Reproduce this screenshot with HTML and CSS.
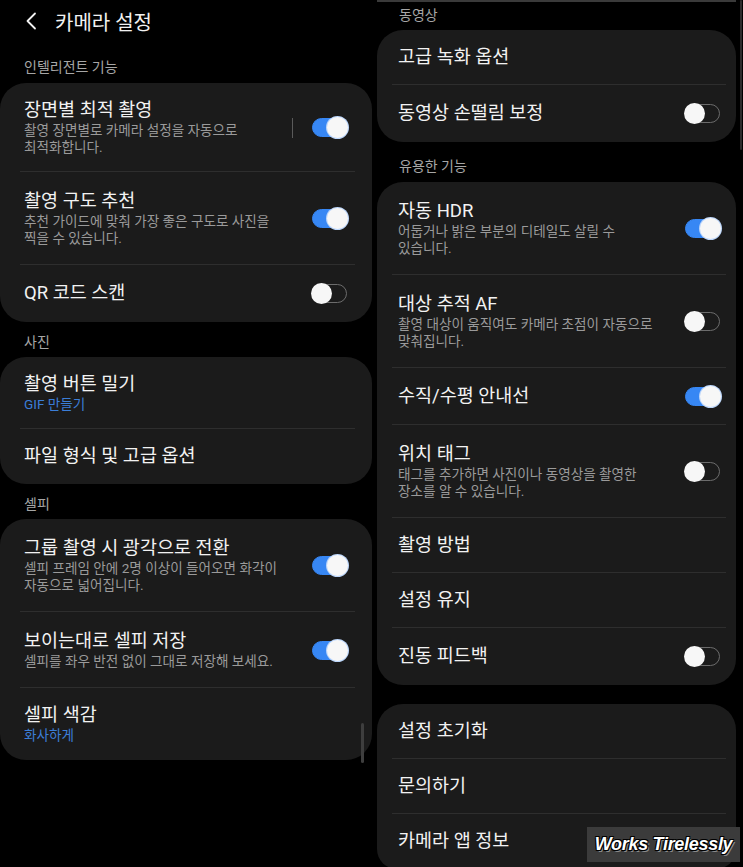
FILE: index.html
```html
<!DOCTYPE html>
<html lang="ko">
	<head>
		<meta charset="UTF-8" />
		<meta name="viewport" content="width=device-width, initial-scale=1.0" />
		<title>카메라 설정</title>

		<link rel="stylesheet" href="styles.css">
	</head>

	<body>
		<div class="phones">
			<!-- left screen -->
			<div class="screen screen-left">
				<div class="topbar">
					<svg class="back" width="12" height="18" viewBox="0 0 12 18">
						<path d="M10 1.5 L2.5 9 L10 16.5" fill="none" stroke="#f2f2f2" stroke-width="1.8" stroke-linecap="round" stroke-linejoin="round" />
					</svg>
					<span>카메라 설정</span>
				</div>

				<div class="group-label first">인텔리전트 기능</div>
				<div class="card">
					<div class="item item-switch compact">
						<div class="item-text">
							<div class="item-title">장면별 최적 촬영</div>
							<div class="item-sub">촬영 장면별로 카메라 설정을 자동으로<br />최적화합니다.</div>
						</div>
						<span class="switch-divider"></span>
						<span class="switch on"><span class="thumb"></span></span>
					</div>
					<div class="item item-switch">
						<div class="item-text">
							<div class="item-title">촬영 구도 추천</div>
							<div class="item-sub">추천 가이드에 맞춰 가장 좋은 구도로 사진을<br />찍을 수 있습니다.</div>
						</div>
						<span class="switch on"><span class="thumb"></span></span>
					</div>
					<div class="item item-switch single">
						<div class="item-text">
							<div class="item-title">QR 코드 스캔</div>
						</div>
						<span class="switch"><span class="thumb"></span></span>
					</div>
				</div>

				<div class="group-label">사진</div>
				<div class="card">
					<div class="item">
						<div class="item-text">
							<div class="item-title">촬영 버튼 밀기</div>
							<div class="item-sub accent">GIF 만들기</div>
						</div>
					</div>
					<div class="item">
						<div class="item-text">
							<div class="item-title">파일 형식 및 고급 옵션</div>
						</div>
					</div>
				</div>

				<div class="group-label">셀피</div>
				<div class="card">
					<div class="item item-switch">
						<div class="item-text">
							<div class="item-title">그룹 촬영 시 광각으로 전환</div>
							<div class="item-sub">셀피 프레임 안에 2명 이상이 들어오면 화각이<br />자동으로 넓어집니다.</div>
						</div>
						<span class="switch on"><span class="thumb"></span></span>
					</div>
					<div class="item item-switch">
						<div class="item-text">
							<div class="item-title">보이는대로 셀피 저장</div>
							<div class="item-sub">셀피를 좌우 반전 없이 그대로 저장해 보세요.</div>
						</div>
						<span class="switch on"><span class="thumb"></span></span>
					</div>
					<div class="item">
						<div class="item-text">
							<div class="item-title">셀피 색감</div>
							<div class="item-sub accent">화사하게</div>
						</div>
					</div>
				</div>

				<span class="scrollbar scrollbar-left"></span>
			</div>
			<!-- /.screen-left -->

			<!-- right screen -->
			<div class="screen screen-right">
				<div class="top-edge"></div>

				<div class="group-label first">동영상</div>
				<div class="card">
					<div class="item">
						<div class="item-text">
							<div class="item-title">고급 녹화 옵션</div>
						</div>
					</div>
					<div class="item item-switch single">
						<div class="item-text">
							<div class="item-title">동영상 손떨림 보정</div>
						</div>
						<span class="switch"><span class="thumb"></span></span>
					</div>
				</div>

				<div class="group-label">유용한 기능</div>
				<div class="card">
					<div class="item item-switch">
						<div class="item-text">
							<div class="item-title">자동 HDR</div>
							<div class="item-sub">어둡거나 밝은 부분의 디테일도 살릴 수<br />있습니다.</div>
						</div>
						<span class="switch on"><span class="thumb"></span></span>
					</div>
					<div class="item item-switch">
						<div class="item-text">
							<div class="item-title">대상 추적 AF</div>
							<div class="item-sub">촬영 대상이 움직여도 카메라 초점이 자동으로<br />맞춰집니다.</div>
						</div>
						<span class="switch"><span class="thumb"></span></span>
					</div>
					<div class="item item-switch single">
						<div class="item-text">
							<div class="item-title">수직/수평 안내선</div>
						</div>
						<span class="switch on"><span class="thumb"></span></span>
					</div>
					<div class="item item-switch">
						<div class="item-text">
							<div class="item-title">위치 태그</div>
							<div class="item-sub">태그를 추가하면 사진이나 동영상을 촬영한<br />장소를 알 수 있습니다.</div>
						</div>
						<span class="switch"><span class="thumb"></span></span>
					</div>
					<div class="item">
						<div class="item-text">
							<div class="item-title">촬영 방법</div>
						</div>
					</div>
					<div class="item">
						<div class="item-text">
							<div class="item-title">설정 유지</div>
						</div>
					</div>
					<div class="item item-switch single">
						<div class="item-text">
							<div class="item-title">진동 피드백</div>
						</div>
						<span class="switch"><span class="thumb"></span></span>
					</div>
				</div>

				<div class="card card-bottom">
					<div class="item">
						<div class="item-text">
							<div class="item-title">설정 초기화</div>
						</div>
					</div>
					<div class="item">
						<div class="item-text">
							<div class="item-title">문의하기</div>
						</div>
					</div>
					<div class="item">
						<div class="item-text">
							<div class="item-title">카메라 앱 정보</div>
						</div>
					</div>
				</div>

				<span class="scrollbar scrollbar-right"></span>
				<div class="watermark">Works Tirelessly</div>
			</div>
			<!-- /.screen-right -->
		</div>
	</body>
</html>
```

FILE: styles.css
```css
body {
	margin: 0;
	background: #000;
	color: #f2f2f2;
	font-family: Roboto, "Noto Sans CJK KR", sans-serif;
}

.phones {
	display: grid;
	grid-template-columns: 372px 368px;
	column-gap: 3px;
	width: 743px;
	height: 867px;
	overflow: hidden;
}

.screen {
	position: relative;
}

.screen-right {
	padding: 0 7px 0 0;
}

/* header */
.topbar {
	display: flex;
	align-items: center;
	gap: 18px;
	height: 42px;
	padding-left: 25px;
	font-size: 20px;
}

.back {
	display: block;
}

/* group labels */
.group-label {
	font-size: 14px;
	line-height: 17px;
	color: #a6a6a6;
	padding: 12px 24px 6px;
}

.screen-left .group-label.first {
	padding-top: 17px;
	padding-bottom: 7px;
}

.screen-right .group-label {
	padding: 16px 24px 7px;
}

.screen-right .group-label.first {
	padding-top: 5px;
	padding-bottom: 6px;
}

.top-edge {
	height: 2px;
	margin-left: 2px;
	background: #3a3a3a;
}

/* cards */
.card {
	background: #1b1b1b;
	border-radius: 26px;
}

.screen-right .card {
	margin-left: 2px;
}

.card-bottom {
	margin-top: 19px;
	border-radius: 26px 26px 20px 20px;
}

.item {
	display: flex;
	align-items: center;
	margin: 0 17px 0 20px;
	padding: 16px 8px 16px 4px;
}

.screen-right .item {
	margin: 0 10px 0 15px;
	padding-left: 6px;
	padding-right: 6px;
}

.item + .item {
	box-shadow: 0 -1px 0 #2e2e2e;
}

.item-switch {
	padding-top: 18px;
	padding-bottom: 18px;
}

.item-switch.single {
	padding-top: 17px;
	padding-bottom: 17px;
}

.item-switch.compact {
	padding-top: 16px;
	padding-bottom: 16px;
}

.item-text {
	flex: 1;
	min-width: 0;
}

.item-title {
	font-size: 18.5px;
	line-height: 23px;
	color: #f2f2f2;
}

.item-sub {
	font-size: 13.6px;
	line-height: 17px;
	color: #9a9a9a;
}

.item-sub.accent {
	color: #3b7ed8;
}

/* switches */
.switch-divider {
	width: 1px;
	height: 20px;
	margin-right: 19px;
	background: #5a5a5a;
}

.switch {
	display: flex;
	align-items: center;
	justify-content: flex-start;
	box-sizing: border-box;
	width: 35px;
	height: 19px;
	border: 1.5px solid #6c6c6c;
	border-radius: 10px;
}

.switch .thumb {
	flex: none;
	width: 21px;
	height: 21px;
	margin-left: -2px;
	border-radius: 50%;
	background: #f7f7f7;
}

.switch.on {
	justify-content: flex-end;
	border-color: #3787f4;
	background: #3787f4;
}

.switch.on .thumb {
	margin-left: 0;
	margin-right: -2px;
	box-shadow: 0 0 0 1px #bcd6fb;
}

/* overlays */
.scrollbar {
	position: absolute;
	border-radius: 2px;
}

.scrollbar-left {
	left: 361px;
	top: 723px;
	width: 3px;
	height: 40px;
	background: #3e3e3e;
}

.scrollbar-right {
	left: 365px;
	top: 0;
	width: 2px;
	height: 150px;
	background: #2c2c2c;
}

.watermark {
	position: absolute;
	left: 212px;
	top: 827px;
	width: 153px;
	height: 35px;
	line-height: 35px;
	text-align: center;
	background: #3b3b3b;
	color: #fff;
	font-family: "Liberation Sans", sans-serif;
	font-size: 18px;
	font-style: italic;
	font-weight: bold;
	letter-spacing: -0.3px;
	text-shadow: 1px 1px 0 #000, -1px -1px 0 #000, 1px -1px 0 #000, -1px 1px 0 #000, 2px 2px 0 #8a8a8a;
}
```
